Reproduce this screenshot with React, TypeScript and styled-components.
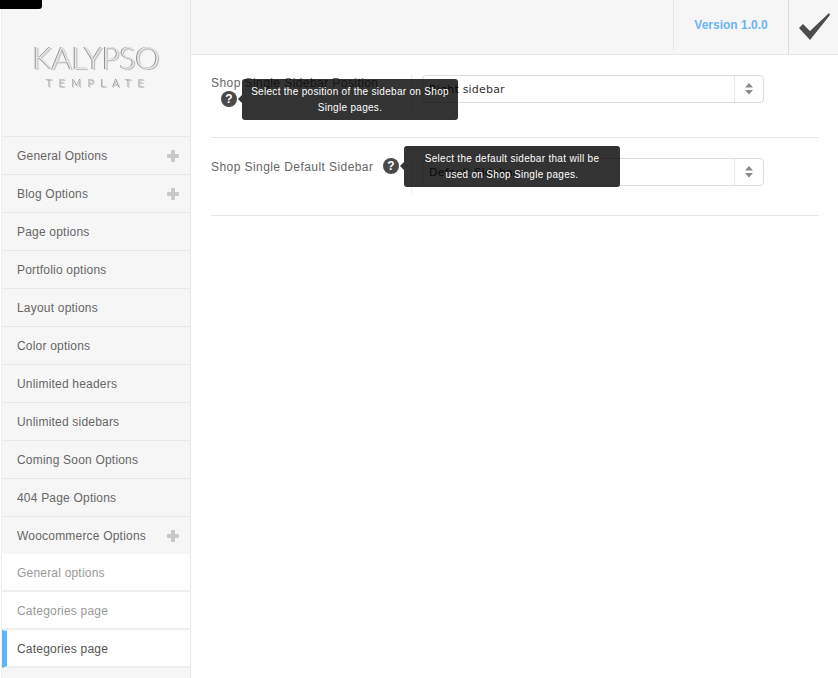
import React from 'react';
import styled, { createGlobalStyle } from 'styled-components';

const GlobalStyle = createGlobalStyle`
    html, body {
        margin: 0;
        padding: 0;
        background: #fff;
    }
    body {
        font-family: "Liberation Sans", Arial, sans-serif;
        overflow: hidden;
    }
`;

const Page = styled.div`
    position: relative;
    display: flex;
    width: 838px;
    height: 678px;
    overflow: hidden;
`;

const TopBlack = styled.div`
    position: absolute;
    top: 0;
    left: 0;
    width: 42px;
    height: 9px;
    background: #000;
    border-bottom-right-radius: 3px;
`;

const Sidebar = styled.aside`
    flex: none;
    width: 188px;
    height: 678px;
    margin-left: 1px;
    background: #f6f6f6;
    border-left: 1px solid #eee;
    border-right: 1px solid #e6e6e6;
`;

const LogoBox = styled.div`
    height: 136px;
    box-sizing: border-box;
    padding-top: 40px;
    text-align: center;
    transform: translateZ(0);
`;

const LogoTitle = styled.div`
    font-family: Lato, sans-serif;
    font-weight: 300;
    font-size: 31px;
    line-height: 35px;
    letter-spacing: -0.5px;
    color: #e6e6e6;
    text-shadow: -1px 0 0 #8f8f8f, 1px 1px 1px #b5b5b5;
`;

const LogoSub = styled.div`
    font-family: Lato, sans-serif;
    font-weight: 300;
    font-size: 11px;
    line-height: 14px;
    margin-top: 1px;
    letter-spacing: 6.3px;
    padding-left: 6px;
    color: #ddd;
    text-shadow: -1px 0 0 #777, 0 1px 0 #aaa;
`;

const Menu = styled.ul`
    list-style: none;
    margin: 0;
    padding: 0;
`;

const MenuItem = styled.li<{ $sub?: boolean; $active?: boolean }>`
    display: flex;
    align-items: center;
    justify-content: space-between;
    box-sizing: border-box;
    height: 38px;
    padding: ${p => (p.$sub ? '0' : '2px')} 11px 0 15px;
    font-size: 12px;
    letter-spacing: 0.2px;
    color: ${p => (p.$active ? '#555' : p.$sub ? '#999' : '#666')};
    background: ${p => (p.$sub ? '#fff' : '#f6f6f6')};
    border-top: 1px solid ${p => (p.$sub ? 'transparent' : '#e8e8e8')};
    border-bottom: 2px solid ${p => (p.$sub ? '#eee' : 'transparent')};
    ${p => p.$active && 'border-left: 5px solid #5cb5fa; padding-left: 10px;'}
`;

const Plus = styled.span`
    position: relative;
    width: 12px;
    height: 12px;
    &::before, &::after {
        content: '';
        position: absolute;
        background: #c8c8c8;
        border-radius: 1px;
    }
    &::before {
        left: 0;
        right: 0;
        top: 4px;
        height: 4px;
    }
    &::after {
        top: 0;
        bottom: 0;
        left: 4px;
        width: 4px;
    }
`;

const Main = styled.main`
    flex: 1;
    min-width: 0;
`;

const Header = styled.header`
    display: flex;
    justify-content: flex-end;
    height: 55px;
    box-sizing: border-box;
    background: #f6f6f6;
    border-bottom: 1px solid #e8e8e8;
`;

const Version = styled.div`
    display: flex;
    align-items: center;
    justify-content: center;
    width: 115px;
    height: 50px;
    box-sizing: border-box;
    border-left: 1px solid #e8e8e8;
    font-size: 12px;
    font-weight: 700;
    color: #6ab5f7;
`;

const SaveButton = styled.div`
    display: flex;
    align-items: center;
    justify-content: center;
    width: 50px;
    box-sizing: border-box;
    border-left: 1px solid #dcdcdc;
`;

const Content = styled.div`
    padding: 0 19px 0 20px;
`;

const OptionRow = styled.div<{ $height: number }>`
    display: flex;
    height: ${p => p.$height}px;
    box-sizing: border-box;
    padding-top: 20px;
    border-bottom: 1px solid #e8e8e8;
`;

const LabelCell = styled.div`
    position: relative;
    flex: none;
    width: 200px;
    font-size: 12px;
    letter-spacing: 0.43px;
    color: #666;
`;

const LabelText = styled.div<{ $top: number }>`
    margin-top: ${p => p.$top}px;
    line-height: 16px;
    white-space: nowrap;
`;

const FieldCell = styled.div`
    flex: none;
    width: 353px;
    height: 37px;
    box-sizing: border-box;
    border-left: 1px solid #eee;
    padding-left: 10px;
`;

const SelectBox = styled.div`
    display: flex;
    width: 342px;
    height: 28px;
    box-sizing: border-box;
    border: 1px solid #dcdcdc;
    border-radius: 4px;
    background: #fff;
`;

const SelectValue = styled.div`
    flex: 1;
    padding-left: 6px;
    line-height: 27px;
    font-family: "DejaVu Sans", sans-serif;
    font-size: 11px;
    letter-spacing: 0.2px;
    color: #333;
`;

const SelectArrows = styled.div`
    display: flex;
    align-items: center;
    justify-content: center;
    width: 28px;
    border-left: 1px solid #e6e6e6;
`;

const HelpIcon = styled.span<{ $left: number; $top: number }>`
    position: absolute;
    left: ${p => p.$left}px;
    top: ${p => p.$top}px;
    width: 16px;
    height: 16px;
    border-radius: 50%;
    background: #4a4a4a;
    color: #fff;
    font-size: 12px;
    font-weight: 700;
    line-height: 16px;
    text-align: center;
    letter-spacing: 0;
`;

const Tooltip = styled.div<{ $left: number; $top: number }>`
    position: absolute;
    left: ${p => p.$left}px;
    top: ${p => p.$top}px;
    width: 216px;
    height: 41px;
    box-sizing: border-box;
    padding-top: 5px;
    border-radius: 3px;
    background: rgba(0, 0, 0, 0.8);
    color: #fff;
    font-size: 10px;
    line-height: 16px;
    letter-spacing: 0.3px;
    text-align: center;
    white-space: nowrap;
    z-index: 2;
    &::before {
        content: '';
        position: absolute;
        left: -4px;
        top: 16px;
        border-top: 4px solid transparent;
        border-bottom: 4px solid transparent;
        border-right: 4px solid #333;
    }
`;

const Arrows = () => (
    <svg width="10" height="12" viewBox="0 0 10 12">
        <path d="M5 0 L9 4.5 H1 Z M1 7 H9 L5 11.5 Z" fill="#8a8a8a" />
    </svg>
);

const Check = () => (
    <svg width="34" height="30" viewBox="0 0 34 30">
        <path d="M2 16 L6 12 L13 19 L32 1 L33 3 L13 28 Z" fill="#4d4d4d" />
    </svg>
);

const mainItems = [
    { label: 'General Options', plus: true },
    { label: 'Blog Options', plus: true },
    { label: 'Page options' },
    { label: 'Portfolio options' },
    { label: 'Layout options' },
    { label: 'Color options' },
    { label: 'Unlimited headers' },
    { label: 'Unlimited sidebars' },
    { label: 'Coming Soon Options' },
    { label: '404 Page Options' },
    { label: 'Woocommerce Options', plus: true },
];

const App = () => {
    return (
        <Page>
            <GlobalStyle />
            <TopBlack />
            <Sidebar>
                <LogoBox>
                    <LogoTitle>KALYPSO</LogoTitle>
                    <LogoSub>TEMPLATE</LogoSub>
                </LogoBox>
                <Menu>
                    {mainItems.map(item => (
                        <MenuItem key={item.label}>
                            {item.label}
                            {item.plus && <Plus />}
                        </MenuItem>
                    ))}
                    <MenuItem $sub>General options</MenuItem>
                    <MenuItem $sub>Categories page</MenuItem>
                    <MenuItem $sub $active>Categories page</MenuItem>
                </Menu>
            </Sidebar>
            <Main>
                <Header>
                    <Version>Version 1.0.0</Version>
                    <SaveButton><Check /></SaveButton>
                </Header>
                <Content>
                    <OptionRow $height={83}>
                        <LabelCell>
                            <LabelText $top={0}>Shop Single Sidebar Position</LabelText>
                            <HelpIcon $left={10} $top={16}>?</HelpIcon>
                            <Tooltip $left={31} $top={4}>Select the position of the sidebar on Shop<br />Single pages.</Tooltip>
                        </LabelCell>
                        <FieldCell>
                            <SelectBox>
                                <SelectValue>Right sidebar</SelectValue>
                                <SelectArrows><Arrows /></SelectArrows>
                            </SelectBox>
                        </FieldCell>
                    </OptionRow>
                    <OptionRow $height={78}>
                        <LabelCell>
                            <LabelText $top={1}>Shop Single Default Sidebar</LabelText>
                            <HelpIcon $left={172} $top={0}>?</HelpIcon>
                            <Tooltip $left={193} $top={-12}>Select the default sidebar that will be<br />used on Shop Single pages.</Tooltip>
                        </LabelCell>
                        <FieldCell>
                            <SelectBox>
                                <SelectValue>Default Sidebar</SelectValue>
                                <SelectArrows><Arrows /></SelectArrows>
                            </SelectBox>
                        </FieldCell>
                    </OptionRow>
                </Content>
            </Main>
        </Page>
    );
};

export default App;
